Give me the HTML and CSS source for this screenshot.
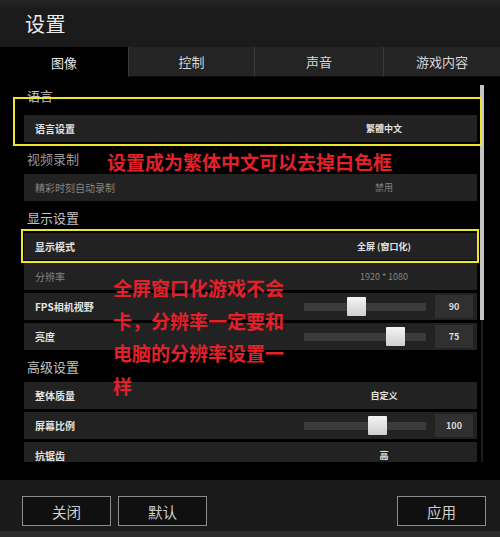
FILE: index.html
```html
<!DOCTYPE html>
<html lang="zh-CN">
<head>
<meta charset="utf-8">
<title>设置</title>
<link rel="stylesheet" href="styles.css">
</head>
<body>
<div class="page">
  <header class="header"><h1 class="title">设置</h1></header>
  <nav class="tabs">
    <div class="tab tab-active">图像</div>
    <div class="tab">控制</div>
    <div class="tab">声音</div>
    <div class="tab">游戏内容</div>
  </nav>
  <main class="content">
    <div class="list">
      <section class="section">
        <div class="sec-label sec-first">语言</div>
        <div class="row"><span class="lbl">语言设置</span><span class="val">繁體中文</span></div>
      </section>
      <section class="section">
        <div class="sec-label sec-dim">视频录制</div>
        <div class="row row-dim"><span class="lbl">精彩时刻自动录制</span><span class="val">禁用</span></div>
      </section>
      <section class="section">
        <div class="sec-label">显示设置</div>
        <div class="row"><span class="lbl">显示模式</span><span class="val">全屏 (窗口化)</span></div>
        <div class="row row-dim"><span class="lbl">分辨率</span><span class="val">1920 * 1080</span></div>
        <div class="row"><span class="lbl">FPS相机视野</span><div class="track"><span class="thumb" style="left:43px"></span></div><span class="box">90</span></div>
        <div class="row"><span class="lbl">亮度</span><div class="track"><span class="thumb" style="left:82px"></span></div><span class="box">75</span></div>
      </section>
      <section class="section">
        <div class="sec-label">高级设置</div>
        <div class="row"><span class="lbl">整体质量</span><span class="val">自定义</span></div>
        <div class="row"><span class="lbl">屏幕比例</span><div class="track"><span class="thumb" style="left:64px"></span></div><span class="box">100</span></div>
        <div class="row"><span class="lbl">抗锯齿</span><span class="val">高</span></div>
      </section>
    </div>
    <div class="scroll"><div class="scroll-thumb"></div></div>
  </main>
  <footer class="footer">
    <button class="btn">关闭</button>
    <button class="btn">默认</button>
    <button class="btn btn-apply">应用</button>
  </footer>

  <div class="mark mark-lang"></div>
  <div class="mark mark-display"></div>
  <p class="note note-lang">设置成为繁体中文可以去掉白色框</p>
  <p class="note note-display">全屏窗口化游戏不会<br>卡，分辨率一定要和<br>电脑的分辨率设置一<br>样</p>
</div>
</body>
</html>
```
FILE: styles.css
```css
* { box-sizing: border-box; }
html, body { margin: 0; padding: 0; }
body {
  background: #000;
  font-family: "Noto Sans CJK SC", "Noto Sans", sans-serif;
  color: #ddd;
}
.page {
  position: relative;
  width: 500px;
  height: 537px;
  overflow: hidden;
  display: flex;
  flex-direction: column;
}
.header {
  height: 47px;
  flex: none;
  display: flex;
  align-items: center;
  padding-left: 25px;
  background: linear-gradient(#262626, #1b1b1b 20%, #1b1b1b);
}
.title {
  margin: 0;
  font-size: 20px;
  font-weight: 400;
  color: #ececec;
  letter-spacing: 0.5px;
}
.tabs {
  height: 30px;
  flex: none;
  display: grid;
  grid-template-columns: 128px 126px 129px 117px;
  background: #000;
}
.tab {
  display: flex;
  align-items: center;
  justify-content: center;
  font-size: 13px;
  color: #d6d6d6;
  background: #242424;
  border-left: 1px solid #3a3a3a;
  border-bottom: 1px solid #0c0c0c;
}
.tab-active {
  background: #000;
  border-left: none;
  border-bottom: none;
  color: #e6e6e6;
}
.content {
  height: 403px;
  flex: none;
  display: flex;
  background: #000;
}
.list {
  width: 477px;
  height: 385px;
  overflow: hidden;
  padding: 6px 0 0 24px;
  flex: none;
}
.section {
  display: flex;
  flex-direction: column;
  gap: 3px;
}
.sec-label {
  height: 29px;
  line-height: 34px;
  padding-left: 3px;
  font-size: 13px;
  color: #c2c2c2;
}
.sec-first { line-height: 26px; }
.sec-dim { color: #9a9a9a; }
.row {
  height: 27px;
  flex: none;
  display: grid;
  grid-template-columns: 1fr 122px 38px;
  column-gap: 9px;
  align-items: center;
  padding: 0 4px 0 11px;
  background: #222;
  font-size: 10px;
  font-weight: 700;
  color: #e2e2e2;
}
.row-dim { color: #858585; font-weight: 400; }
.lbl { white-space: nowrap; }
.val {
  grid-column: 2 / 4;
  text-align: center;
  padding-right: 9px;
  font-size: 9px;
}
.track {
  position: relative;
  height: 8px;
  background: #3b3b3b;
}
.thumb {
  position: absolute;
  top: -6px;
  width: 19px;
  height: 19px;
  background: linear-gradient(#f4f4f4, #cfcfcf);
  border-radius: 1px;
}
.box {
  height: 23px;
  display: flex;
  align-items: center;
  justify-content: center;
  background: #303030;
  font-size: 9px;
  color: #dcdcdc;
}
.scroll {
  width: 4px;
  margin: 8px 0 0 3px;
  height: 377px;
  background: linear-gradient(90deg, transparent 1px, #1e1e1e 1px, #1e1e1e 3px, transparent 3px);
}
.scroll-thumb {
  height: 235px;
  background: #c4c4c4;
}
.footer {
  height: 57px;
  flex: none;
  display: flex;
  gap: 7px;
  padding: 16px 14px 0 22px;
  background: #1a1a1a;
  border-bottom: 6px solid #2c2c2c;
}
.btn {
  width: 89px;
  height: 30px;
  background: #101010;
  border: 1px solid #8c8c8c;
  color: #cfcfcf;
  font-family: inherit;
  font-size: 14.5px;
  padding: 0;
}
.btn-apply { margin-left: auto; }
.mark {
  position: absolute;
  border: 2.5px solid #efe62a;
}
.mark-lang { left: 13px; top: 97px; width: 469px; height: 49px; }
.mark-display { left: 21px; top: 229px; width: 458px; height: 34px; }
.note {
  position: absolute;
  margin: 0;
  color: #e3212b;
  font-size: 19px;
  font-weight: 700;
  white-space: nowrap;
}
.note-lang { left: 107px; top: 151px; line-height: 22px; }
.note-display { left: 113px; top: 272px; line-height: 32.5px; }
```
